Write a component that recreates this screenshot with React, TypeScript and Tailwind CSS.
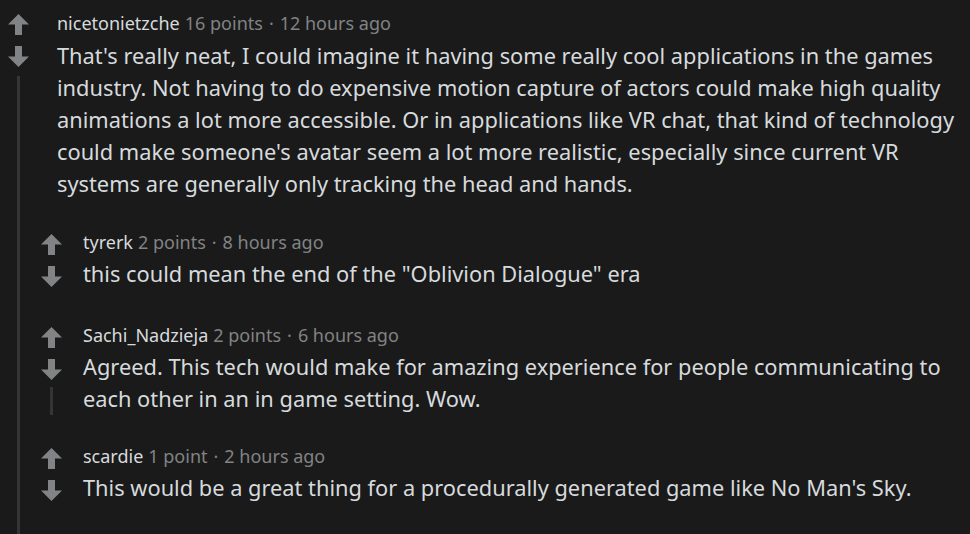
import React from "react";

type CommentData = {
  author: string;
  points: string;
  time: string;
  body: string;
};

const top: CommentData = {
  author: "nicetonietzche",
  points: "16 points",
  time: "12 hours ago",
  body: "That's really neat, I could imagine it having some really cool applications in the games industry. Not having to do expensive motion capture of actors could make high quality animations a lot more accessible. Or in applications like VR chat, that kind of technology could make someone's avatar seem a lot more realistic, especially since current VR systems are generally only tracking the head and hands.",
};

const replies: CommentData[] = [
  {
    author: "tyrerk",
    points: "2 points",
    time: "8 hours ago",
    body: 'this could mean the end of the "Oblivion Dialogue" era',
  },
  {
    author: "Sachi_Nadzieja",
    points: "2 points",
    time: "6 hours ago",
    body: "Agreed. This tech would make for amazing experience for people communicating to each other in an in game setting. Wow.",
  },
  {
    author: "scardie",
    points: "1 point",
    time: "2 hours ago",
    body: "This would be a great thing for a procedurally generated game like No Man's Sky.",
  },
];

function Arrow({ down = false }: { down?: boolean }) {
  return (
    <svg width="21" height="21" viewBox="0 0 21 21" className={down ? "rotate-180" : ""}>
      <polygon points="10.5,0 21,10.5 14,10.5 14,21 7,21 7,10.5 0,10.5" fill="#818384" />
    </svg>
  );
}

function Header({ c }: { c: CommentData }) {
  return (
    <div className="h-[22px] text-[18px] leading-[22px] whitespace-nowrap">
      <span className="text-[#d7dadc]">{c.author}</span>
      <span className="ml-[5px] text-[#818384]">{c.points}</span>
      <span className="mx-[6px] text-[#818384]">·</span>
      <span className="text-[#818384]">{c.time}</span>
    </div>
  );
}

function Reply({ c }: { c: CommentData }) {
  return (
    <div className="flex pb-[7px]">
      <div className="flex w-[21px] shrink-0 flex-col items-center pt-[3px]">
        <Arrow />
        <div className="mt-[11px]">
          <Arrow down />
        </div>
        <div className="mt-[7px] w-[3px] flex-1 bg-[#343536]" />
      </div>
      <div className="ml-[21px] flex-1">
        <Header c={c} />
        <p className="mt-[5px] text-[21.8px] leading-[32px] text-[#d7dadc]">{c.body}</p>
      </div>
    </div>
  );
}

export default function App() {
  return (
    <div
      className="flex h-[534px] overflow-hidden bg-[#1a1a1b] pr-[8px]"
      style={{ fontFamily: '"Noto Sans", "Open Sans", sans-serif' }}
    >
      <div className="ml-[8px] flex w-[21px] shrink-0 flex-col items-center pt-[14px]">
        <Arrow />
        <div className="mt-[11px]">
          <Arrow down />
        </div>
        <div className="mt-[9px] w-[3px] flex-1 bg-[#343536]" />
      </div>
      <div className="flex-1">
        <div className="pl-[28px] pt-[12px]">
          <Header c={top} />
          <p className="mt-[6px] text-[21.8px] leading-[32px] text-[#d7dadc]">{top.body}</p>
        </div>
        <div className="mt-[31px] flex flex-col gap-[23px] pl-[12px]">
          {replies.map((r) => (
            <Reply key={r.author} c={r} />
          ))}
        </div>
      </div>
    </div>
  );
}
